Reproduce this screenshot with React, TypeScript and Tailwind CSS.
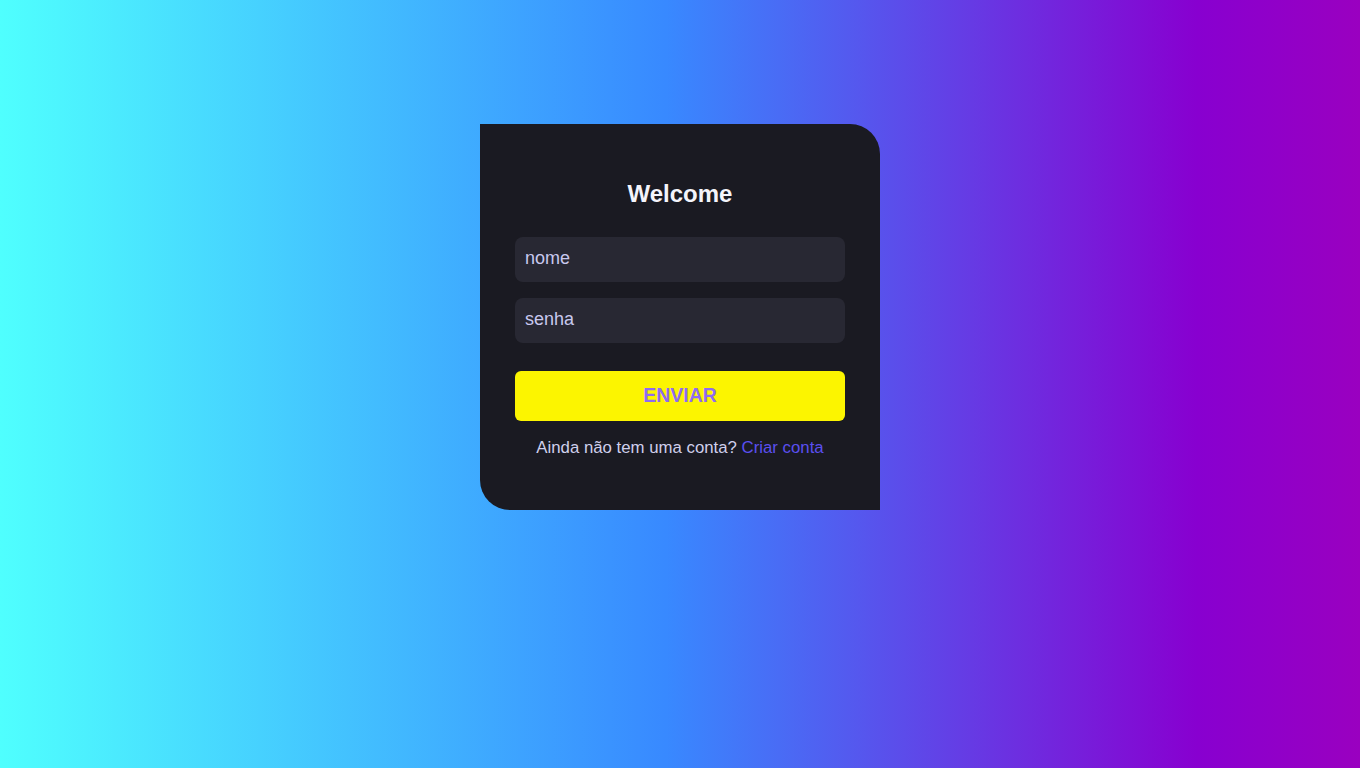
import React from "react";

const App = () => {
  return (
    <div className="w-[1360px] h-[768px] bg-[linear-gradient(to_right,#4ffffe_0%,#3889ff_49%,#8800d0_88%,#9a00c0_100%)] flex justify-center font-['Liberation_Sans',Arial,sans-serif]">
      {/* login card */}
      <div className="mt-[124px] w-[400px] h-[386px] bg-[#1a1a22] rounded-tr-[30px] rounded-bl-[30px] px-[35px] pt-[56px] flex flex-col">
        <h1 className="text-[24px] leading-[28px] font-bold text-center text-[#f4f4fb]">
          Welcome
        </h1>

        <div className="mt-[29px] flex flex-col gap-[16px]">
          <input
            placeholder="nome"
            className="h-[45px] w-full rounded-[8px] bg-[#282833] px-[10px] pb-[2px] text-[18px] text-[#c8c8ee] placeholder:text-[#c8c8ee] outline-none"
          />
          <input
            type="password"
            placeholder="senha"
            className="h-[45px] w-full rounded-[8px] bg-[#282833] px-[10px] pb-[2px] text-[18px] text-[#c8c8ee] placeholder:text-[#c8c8ee] outline-none"
          />
        </div>

        <button className="mt-[28px] h-[50px] w-full rounded-[6px] bg-[#fcf500] text-[19.5px] font-bold text-[#8f6cf0]">
          ENVIAR
        </button>

        <p className="mt-[17px] text-center text-[16.8px] leading-[20px] text-[#cfcfec]">
          Ainda não tem uma conta?{" "}
          <a href="#" className="text-[#5a4ff0]">
            Criar conta
          </a>
        </p>
      </div>
    </div>
  );
};

export default App;
